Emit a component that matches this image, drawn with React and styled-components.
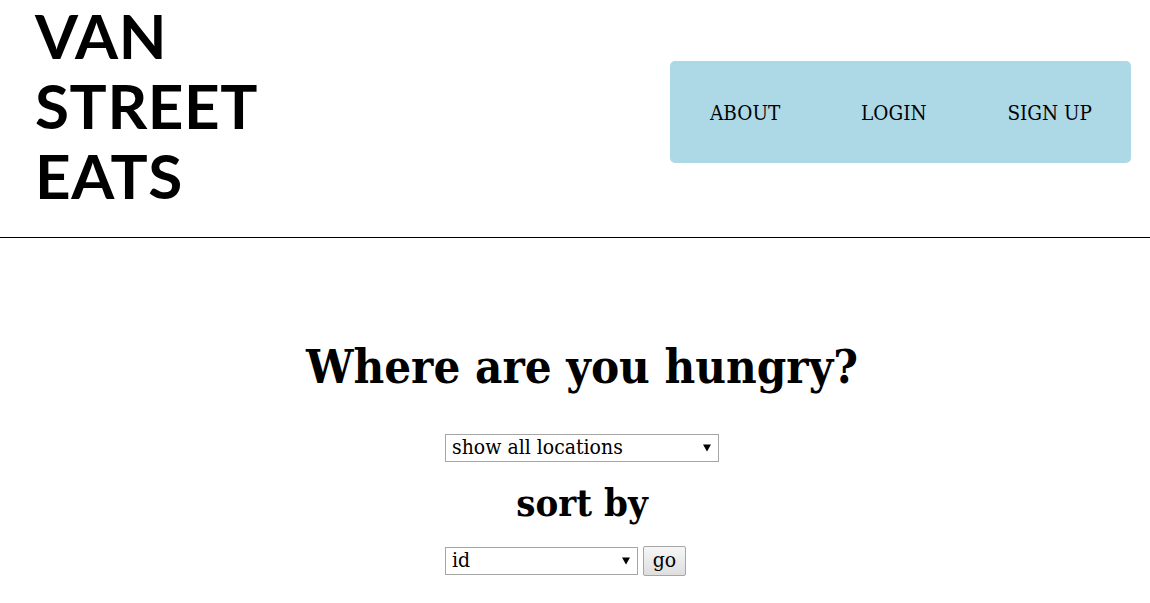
import React from "react";
import styled, { createGlobalStyle } from "styled-components";

const Global = createGlobalStyle`
  html, body { margin: 0; padding: 0; background: #fff; }
  body { font-family: "DejaVu Serif", serif; color: #000; }
`;

const serif = `"DejaVu Serif Condensed", "DejaVu Serif", serif`;

const Header = styled.header`
  display: flex;
  justify-content: space-between;
  align-items: flex-start;
  height: 237px;
  border-bottom: 1px solid #000;
  padding: 0 19px 0 35px;
  box-sizing: content-box;
`;

const Logo = styled.h1`
  margin: 0;
  font-family: "Lato", sans-serif;
  font-weight: 700;
  font-size: 62px;
  line-height: 70px;
  letter-spacing: 0.6px;
`;

const Nav = styled.nav`
  display: flex;
  align-items: center;
  justify-content: space-between;
  width: 461px;
  height: 102px;
  box-sizing: border-box;
  padding: 0 39px 0 40px;
  background: #add8e6;
  border-radius: 5px;
  margin-top: 61px;
`;

const NavLink = styled.a`
  font-family: ${serif};
  font-size: 20.5px;
  color: #000;
  text-decoration: none;
  padding-top: 2px;
`;

const Main = styled.main`
  display: flex;
  flex-direction: column;
  align-items: center;
  padding: 99px 0 0 14px;
`;

const Title = styled.h2`
  margin: 0;
  font-family: ${serif};
  font-weight: 700;
  font-size: 47px;
  line-height: 60px;
`;

const Form = styled.form`
  width: 274px;
  display: flex;
  flex-direction: column;
  align-items: flex-start;
  margin-top: 37px;
`;

const SubTitle = styled.h3`
  align-self: stretch;
  text-align: center;
  font-family: ${serif};
  font-weight: 700;
  font-size: 38px;
  line-height: 48px;
  margin: 17px 0 19px;
`;

const SelectWrap = styled.div`
  position: relative;
  width: ${(p) => p.$w}px;
  height: 28px;
`;

const Select = styled.select`
  appearance: none;
  -webkit-appearance: none;
  width: 100%;
  height: 100%;
  box-sizing: border-box;
  font-family: ${serif};
  font-size: 21px;
  border: 1px solid #a6a6a6;
  background: #fff;
  padding: 0 20px 2px 6px;
  color: #000;
  border-radius: 0;
  outline: none;
`;

const Arrow = styled.span`
  position: absolute;
  right: 8px;
  top: 50%;
  transform: translateY(-50%);
  width: 0;
  height: 0;
  border-left: 4px solid transparent;
  border-right: 4px solid transparent;
  border-top: 7px solid #000;
  pointer-events: none;
`;

const Row = styled.div`
  display: flex;
  align-items: center;
  gap: 5px;
`;

const Button = styled.button`
  height: 30px;
  width: 43px;
  font-family: ${serif};
  font-size: 21px;
  border: 1px solid #a6a6a6;
  border-radius: 2px;
  background: linear-gradient(#f6f6f6, #dedede);
  padding: 0 0 3px;
  color: #000;
`;

function Dropdown({ width, value, children }) {
  return (
    <SelectWrap $w={width}>
      <Select defaultValue={value}>{children}</Select>
      <Arrow />
    </SelectWrap>
  );
}

export default function App() {
  return (
    <>
      <Global />
      <Header>
        <Logo>
          VAN
          <br />
          STREET
          <br />
          EATS
        </Logo>
        <Nav>
          <NavLink href="#">ABOUT</NavLink>
          <NavLink href="#">LOGIN</NavLink>
          <NavLink href="#">SIGN UP</NavLink>
        </Nav>
      </Header>
      <Main>
        <Title>Where are you hungry?</Title>
        <Form onSubmit={(e) => e.preventDefault()}>
          <Dropdown width={274} value="all">
            <option value="all">show all locations</option>
          </Dropdown>
          <SubTitle>sort by</SubTitle>
          <Row>
            <Dropdown width={193} value="id">
              <option value="id">id</option>
            </Dropdown>
            <Button type="submit">go</Button>
          </Row>
        </Form>
      </Main>
    </>
  );
}
